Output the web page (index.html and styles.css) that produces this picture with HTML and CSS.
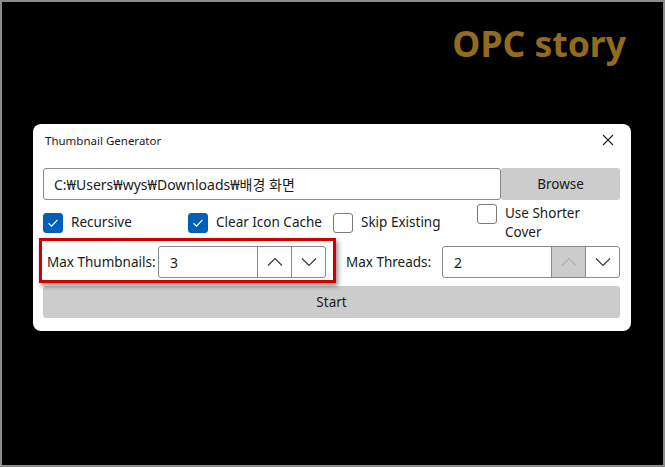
FILE: index.html
```html
<!DOCTYPE html>
<html>
<head>
<meta charset="utf-8">
<link rel="stylesheet" href="styles.css">
</head>
<body>
<div class="frame">
  <div class="brand">OPC story</div>
  <div class="window">
    <div class="titlebar">
      <span class="title">Thumbnail Generator</span>
      <svg class="close" width="12" height="12" viewBox="0 0 12 12"><path d="M1 1L11 11M11 1L1 11" stroke="#222" stroke-width="1.1" fill="none"/></svg>
    </div>
    <div class="content">
      <div class="path-row">
        <div class="textbox path">C:₩Users₩wys₩Downloads₩배경 화면</div>
        <div class="btn browse">Browse</div>
      </div>
      <div class="check-row">
        <div class="check"><span class="box on"><svg width="14" height="14" viewBox="0 0 14 14"><path d="M2.5 7.2L5.6 10.2L11.5 3.8" stroke="#fff" stroke-width="1.2" fill="none"/></svg></span><span class="label">Recursive</span></div>
        <div class="check"><span class="box on"><svg width="14" height="14" viewBox="0 0 14 14"><path d="M2.5 7.2L5.6 10.2L11.5 3.8" stroke="#fff" stroke-width="1.2" fill="none"/></svg></span><span class="label">Clear Icon Cache</span></div>
        <div class="check"><span class="box"></span><span class="label">Skip Existing</span></div>
        <div class="check top"><span class="box"></span><span class="label">Use Shorter<br>Cover</span></div>
      </div>
      <div class="spin-row">
        <div class="highlight"></div>
        <div class="field first">
          <span class="flabel">Max Thumbnails:</span>
          <div class="spinner s1">
            <span class="value">3</span>
            <span class="sbtn"><svg width="16" height="10" viewBox="0 0 16 10"><path d="M1 8.5L8 1.5L15 8.5" stroke="#333" stroke-width="1.1" fill="none"/></svg></span>
            <span class="sbtn"><svg width="16" height="10" viewBox="0 0 16 10"><path d="M1 1.5L8 8.5L15 1.5" stroke="#333" stroke-width="1.1" fill="none"/></svg></span>
          </div>
        </div>
        <div class="field second">
          <span class="flabel">Max Threads:</span>
          <div class="spinner s2">
            <span class="value">2</span>
            <span class="sbtn disabled"><svg width="16" height="10" viewBox="0 0 16 10"><path d="M1 8.5L8 1.5L15 8.5" stroke="#b0b0b0" stroke-width="1.1" fill="none"/></svg></span>
            <span class="sbtn"><svg width="16" height="10" viewBox="0 0 16 10"><path d="M1 1.5L8 8.5L15 1.5" stroke="#333" stroke-width="1.1" fill="none"/></svg></span>
          </div>
        </div>
      </div>
      <div class="btn start">Start</div>
    </div>
  </div>
</div>
</body>
</html>
```
FILE: styles.css
```css
* { box-sizing: border-box; }
html, body { margin: 0; padding: 0; }
body {
  width: 665px;
  height: 467px;
  background: #000;
  font-family: "Noto Sans", "Noto Sans CJK KR", sans-serif;
  color: #1a1a1a;
}
.frame {
  width: 665px;
  height: 467px;
  border: 2px solid #8c8c8c;
  background: #000;
  padding: 0 0 0 31px;
  overflow: hidden;
}
.brand {
  height: 122px;
  padding: 20px 37px 0 0;
  text-align: right;
  color: #936b1e;
  font-weight: bold;
  font-size: 35.5px;
  line-height: 42px;
}
.window {
  width: 598px;
  height: 207px;
  background: #fff;
  border-radius: 8px;
}
.titlebar {
  height: 32px;
  display: flex;
  align-items: center;
  justify-content: space-between;
  padding: 0 17px 0 12px;
  font-size: 11.5px;
}
.content {
  padding: 12px 11px 0 10px;
  font-size: 13.5px;
  white-space: nowrap;
}
.path-row {
  display: flex;
  height: 32px;
}
.textbox {
  border: 1px solid #8a8a8a;
  border-radius: 3px;
}
.path {
  width: 458px;
  display: flex;
  align-items: center;
  padding-left: 10px;
  font-size: 14px;
}
.btn {
  background: #cccccc;
  border-radius: 3px;
  display: flex;
  align-items: center;
  justify-content: center;
}
.browse { flex: 1; }
.check-row {
  display: grid;
  grid-template-columns: 145px 145px 144px 143px;
  align-items: center;
  margin-top: 4px;
  height: 38px;
}
.check {
  display: flex;
  align-items: center;
}
.check.top { align-items: flex-start; }
.box {
  width: 20px;
  height: 20px;
  border: 1px solid #7a7a7a;
  border-radius: 3px;
  flex: none;
  display: flex;
  align-items: center;
  justify-content: center;
  background: #fff;
}
.box.on {
  background: #005fb8;
  border-color: #005fb8;
}
.label {
  margin-left: 8px;
  line-height: 19px;
  padding-bottom: 2px;
}
.check.top .label { padding-bottom: 0; margin-top: 0; }
.spin-row {
  position: relative;
  display: flex;
  margin-top: 4px;
  height: 32px;
}
.highlight {
  position: absolute;
  left: -4px;
  top: -8px;
  width: 297px;
  height: 45px;
  border: 3px solid #cc0000;
  box-shadow: 2px 3px 5px rgba(0,0,0,0.45);
  pointer-events: none;
}
.field {
  display: flex;
  align-items: center;
}
.first { width: 283px; padding-left: 4px; }
.second { flex: 1; padding-left: 20px; }
.flabel { flex: 1; padding-bottom: 1px; }
.spinner {
  display: flex;
  height: 32px;
  border: 1px solid #8a8a8a;
  border-radius: 3px;
  overflow: hidden;
}
.s1 { width: 168px; }
.s2 { width: 178px; }
.value {
  flex: 1;
  display: flex;
  align-items: center;
  padding-left: 11px;
  font-size: 14px;
}
.sbtn {
  width: 34px;
  border-left: 1px solid #8a8a8a;
  display: flex;
  align-items: center;
  justify-content: center;
}
.sbtn.disabled {
  background: #cccccc;
}
.start {
  margin-top: 8px;
  height: 32px;
}
```
